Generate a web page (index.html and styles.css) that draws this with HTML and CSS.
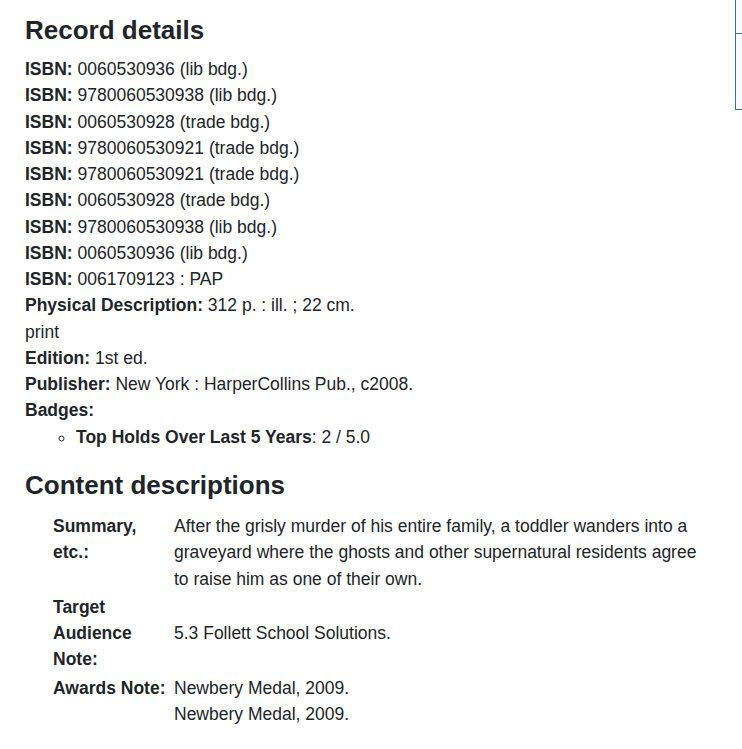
FILE: index.html
```html
<!DOCTYPE html>
<html lang="en">
<head>
<meta charset="utf-8">
<title>Record details</title>
<link rel="stylesheet" href="styles.css">
</head>
<body>
<main class="record">
  <h2 class="section-title">Record details</h2>
  <ul class="fields">
    <li><span class="label">ISBN:</span> 0060530936 (lib bdg.)</li>
    <li><span class="label">ISBN:</span> 9780060530938 (lib bdg.)</li>
    <li><span class="label">ISBN:</span> 0060530928 (trade bdg.)</li>
    <li><span class="label">ISBN:</span> 9780060530921 (trade bdg.)</li>
    <li><span class="label">ISBN:</span> 9780060530921 (trade bdg.)</li>
    <li><span class="label">ISBN:</span> 0060530928 (trade bdg.)</li>
    <li><span class="label">ISBN:</span> 9780060530938 (lib bdg.)</li>
    <li><span class="label">ISBN:</span> 0060530936 (lib bdg.)</li>
    <li><span class="label">ISBN:</span> 0061709123 : PAP</li>
    <li><span class="label">Physical Description:</span> 312 p. : ill. ; 22 cm.</li>
    <li>print</li>
    <li><span class="label">Edition:</span> 1st ed.</li>
    <li><span class="label">Publisher:</span> New York : HarperCollins Pub., c2008.</li>
    <li><span class="label">Badges:</span>
      <ul class="badges">
        <li><span class="label">Top Holds Over Last 5 Years</span>: 2 / 5.0</li>
      </ul>
    </li>
  </ul>

  <h2 class="section-title section-title--spaced">Content descriptions</h2>
  <dl class="notes">
    <div class="note-row">
      <dt class="note-label">Summary, etc.:</dt>
      <dd class="note-value">After the grisly murder of his entire family, a toddler wanders into a graveyard where the ghosts and other supernatural residents agree to raise him as one of their own.</dd>
    </div>
    <div class="note-row">
      <dt class="note-label">Target Audience Note:</dt>
      <dd class="note-value">5.3 Follett School Solutions.</dd>
    </div>
    <div class="note-row">
      <dt class="note-label">Awards Note:</dt>
      <dd class="note-value">Newbery Medal, 2009.<br>Newbery Medal, 2009.</dd>
    </div>
  </dl>
</main>

<aside class="side-panel" aria-hidden="true">
  <div class="side-panel__head"></div>
  <div class="side-panel__body"></div>
</aside>
</body>
</html>
```

FILE: styles.css
```css
html, body {
  margin: 0;
  padding: 0;
  background: #ffffff;
}

body {
  font-family: "Liberation Sans", Arial, sans-serif;
  font-size: 17.5px;
  line-height: 1.5;
  color: #212529;
  position: relative;
  min-height: 749px;
}

.record {
  padding: 15px 30px 0 25px;
  max-width: 687px;
}

.section-title {
  font-size: 26px;
  font-weight: 700;
  line-height: 1.2;
  margin: 0 0 10px;
  color: #212529;
}

.section-title--spaced {
  margin-top: 20px;
  margin-bottom: 11px;
}

.fields {
  list-style: none;
  margin: 0;
  padding: 0;
}

.label {
  font-weight: 700;
}

.badges {
  list-style: circle;
  margin: 0;
  padding: 0 0 0 51px;
}

.notes {
  margin: 0 0 0 28px;
  padding: 0;
}

.note-row {
  display: grid;
  grid-template-columns: 121px 1fr;
  padding: 1px 0;
}

.note-label {
  font-weight: 700;
  margin: 0;
  padding-right: 8px;
  align-self: start;
}

.note-value {
  margin: 0;
  align-self: center;
}

.side-panel {
  position: absolute;
  top: 0;
  left: 735px;
  right: 0;
  height: 109px;
  border-left: 1px solid #3d6a99;
  border-bottom: 1px solid #3d6a99;
  background: #f7f9fc;
}

.side-panel__head {
  height: 33px;
  border-bottom: 1px solid #3d6a99;
}
```
